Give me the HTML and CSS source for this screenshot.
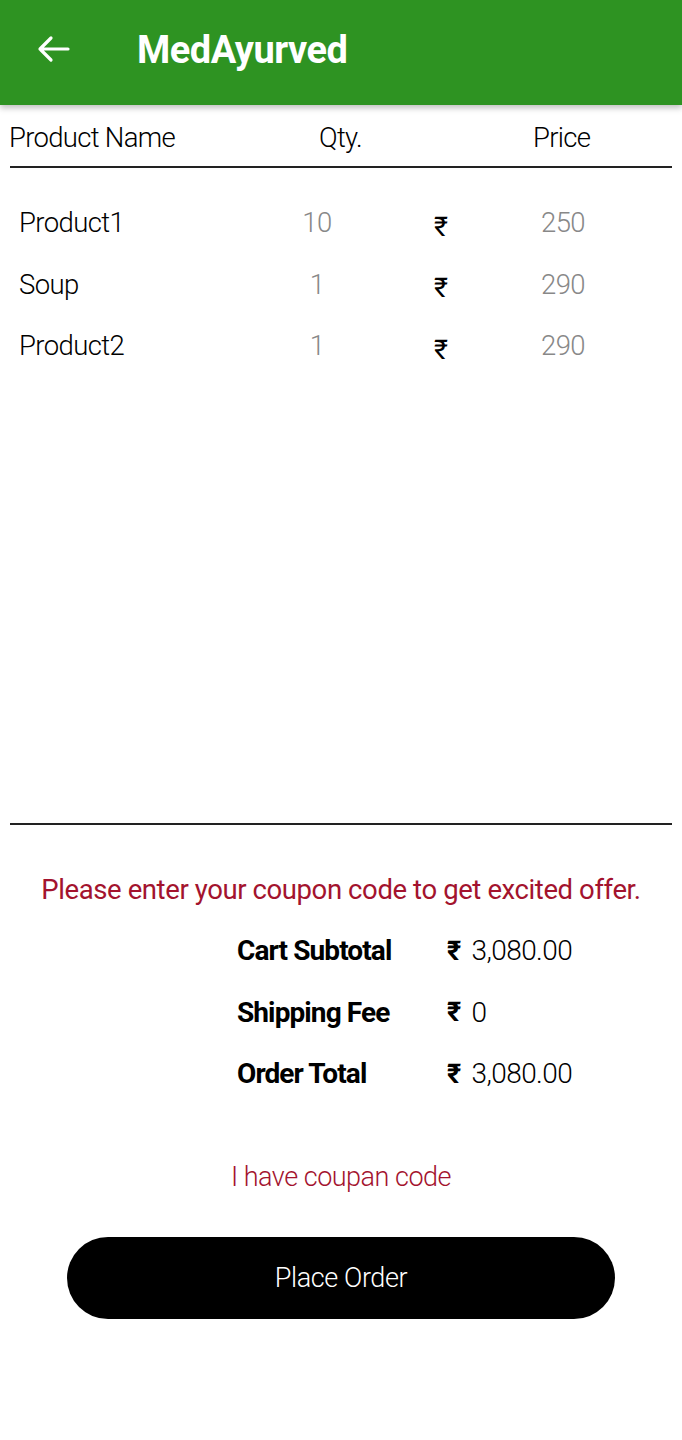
FILE: index.html
```html
<!DOCTYPE html>
<html>
<head>
<meta charset="utf-8">
<link rel="stylesheet" href="styles.css">
</head>
<body>
<div class="app">
  <header class="topbar">
    <span class="back">
      <svg width="34" height="28" viewBox="0 0 34 28"><path d="M32 14H4M15 3L4 14l11 11" fill="none" stroke="#fff" stroke-width="3.2" stroke-linecap="round" stroke-linejoin="round"/></svg>
    </span>
    <h1 class="title">MedAyurved</h1>
  </header>

  <div class="table-head">
    <span class="col-name">Product Name</span>
    <span class="col-qty">Qty.</span>
    <span class="col-price">Price</span>
  </div>

  <div class="items">
    <div class="item">
      <span class="i-name">Product1</span>
      <span class="i-qty">10</span>
      <span class="i-cur">₹</span>
      <span class="i-price">250</span>
    </div>
    <div class="item">
      <span class="i-name">Soup</span>
      <span class="i-qty">1</span>
      <span class="i-cur">₹</span>
      <span class="i-price">290</span>
    </div>
    <div class="item">
      <span class="i-name">Product2</span>
      <span class="i-qty">1</span>
      <span class="i-cur">₹</span>
      <span class="i-price">290</span>
    </div>
  </div>

  <div class="summary">
    <p class="offer">Please enter your coupon code to get excited offer.</p>
    <div class="totals">
      <span class="t-label">Cart Subtotal</span><span class="t-val"><span class="t-cur">₹</span>3,080.00</span>
      <span class="t-label">Shipping Fee</span><span class="t-val"><span class="t-cur">₹</span>0</span>
      <span class="t-label">Order Total</span><span class="t-val"><span class="t-cur">₹</span>3,080.00</span>
    </div>
    <p class="coupon">I have coupan code</p>
    <button class="order-btn">Place Order</button>
  </div>
</div>
</body>
</html>
```

FILE: styles.css
```css
* { box-sizing: border-box; }
html, body { margin: 0; padding: 0; background: #fff; }
body { font-family: Roboto, "Noto Sans", sans-serif; color: #000; }
.app { width: 682px; min-height: 1440px; display: flex; flex-direction: column; }

.topbar {
  height: 105px;
  background: #2e9322;
  display: flex;
  align-items: center;
  box-shadow: 0 3px 6px rgba(0,0,0,0.25);
  position: relative;
  z-index: 1;
}
.back { width: 137px; padding-left: 36px; display: flex; align-items: center; padding-bottom: 8px; }
.title {
  margin: 0;
  color: #fff;
  font-weight: 700;
  font-size: 38px;
  letter-spacing: -0.5px;
  padding-bottom: 6px;
}

.table-head {
  margin: 0 10px;
  display: grid;
  grid-template-columns: 250px 180px 1fr;
  height: 63px;
  align-items: center;
  border-bottom: 2px solid #222;
  font-weight: 300;
  font-size: 27.5px;
  letter-spacing: -0.7px;
  padding-top: 4px;
}
.col-name { margin-left: -1px; }
.col-qty { padding-left: 59px; }
.col-price { padding-left: 93px; }

.items { padding: 24px 0 0; height: 655px; }
.item {
  display: grid;
  grid-template-columns: 250px 96px 176px 1fr;
  height: 61.5px;
  align-items: center;
  font-size: 27.5px;
  font-weight: 300;
  letter-spacing: -0.6px;
  padding-left: 19px;
}
.i-qty { color: #888; text-align: center; }
.i-cur { color: #000; font-size: 27px; padding-left: 69px; padding-top: 8px; font-weight: 400; }
.i-price { color: #888; }

.summary {
  margin: 0 10px;
  border-top: 2px solid #222;
  display: flex;
  flex-direction: column;
  align-items: center;
}
.offer {
  margin: 48px 0 0;
  color: #a3132e;
  font-size: 27.5px;
  letter-spacing: -0.4px;
}
.totals {
  align-self: flex-start;
  margin-left: 227px;
  margin-top: 14px;
  display: grid;
  grid-template-columns: 210px auto;
}
.t-label, .t-val { height: 61.5px; display: flex; align-items: center; font-size: 28px; letter-spacing: -0.6px; }
.t-label { font-weight: 700; letter-spacing: -0.9px; }
.t-val { font-weight: 300; }
.t-cur { font-weight: 700; font-size: 27px; margin-right: 11px; }

.coupon {
  margin: 56px 0 0;
  color: #a3132e;
  font-size: 27px;
  font-weight: 300;
  letter-spacing: -0.5px;
}
.order-btn {
  margin-top: 44px;
  width: 548px;
  height: 82px;
  border: none;
  border-radius: 41px;
  background: #000;
  color: #fff;
  font-family: Roboto, sans-serif;
  font-weight: 300;
  font-size: 27px;
  letter-spacing: -0.4px;
}
```
